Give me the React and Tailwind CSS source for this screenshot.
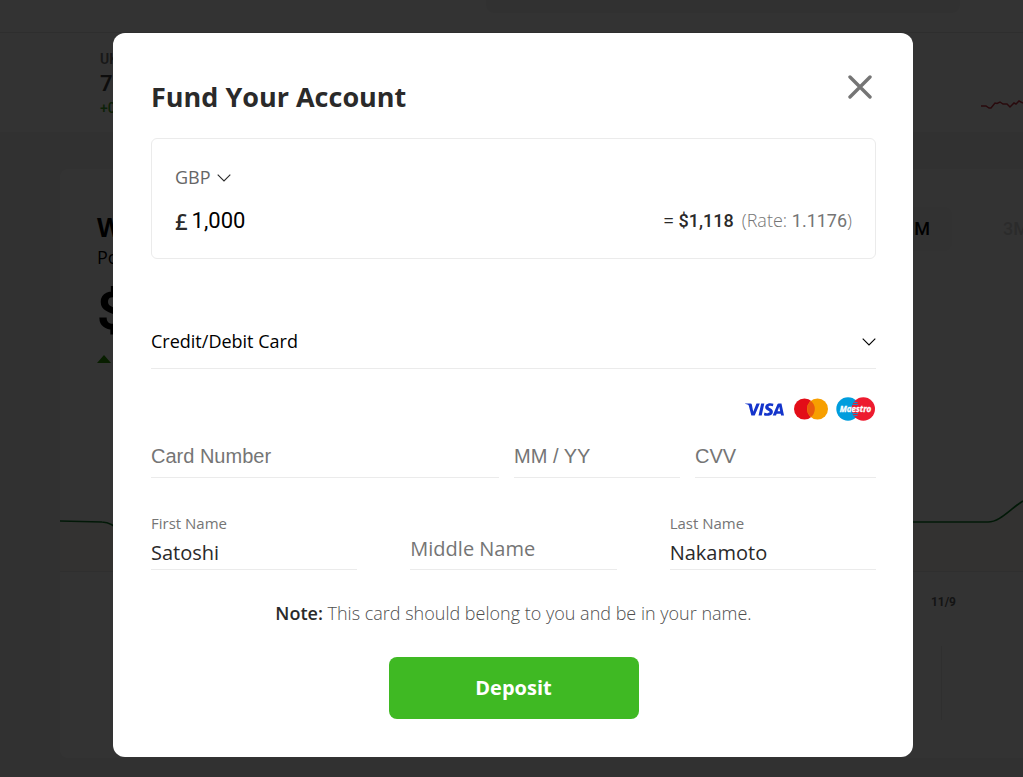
import { useState } from "react";
import { SiVisa } from "react-icons/si";

function Chevron() {
  return (
    <svg className="mt-0.5 h-2 w-3.5" viewBox="0 0 14 8" fill="none" stroke="currentColor" strokeWidth="1.1" aria-hidden="true">
      <path d="M0.7 0.7 7 7l6.3-6.3" />
    </svg>
  );
}

function Mastercard() {
  return (
    <svg className="h-[22px] w-[34px]" viewBox="0 0 34 22" role="img" aria-label="Mastercard">
      <circle cx="10.5" cy="11" r="10.5" fill="#e30d18" />
      <circle cx="23.5" cy="11" r="10.5" fill="#f79f00" />
      <path d="M17 2.9a10.5 10.5 0 0 1 0 16.2 10.5 10.5 0 0 1 0-16.2Z" fill="#ea5b0c" />
    </svg>
  );
}

function Maestro() {
  return (
    <svg className="h-6 w-[39px]" viewBox="0 0 39 24" role="img" aria-label="Maestro">
      <circle cx="12" cy="12" r="11.7" fill="#009ddd" />
      <circle cx="27.3" cy="12" r="11.7" fill="#ed1b2f" />
      <path d="M17.5 5.5h4M16.5 7.5h5.5M16.5 16.5h5.5M17.5 18.5h4" stroke="#009ddd" strokeWidth="0.9" />
      <text
        x="19.5"
        y="14.6"
        textAnchor="middle"
        fill="#fff"
        stroke="#fff"
        strokeWidth="0.3"
        className="font-['Open_Sans',sans-serif] text-[8px] font-bold italic"
      >
        Maestro
      </text>
    </svg>
  );
}

function CardField({ id, label, className }) {
  return (
    <div className={className}>
      <input
        id={id}
        aria-label={label}
        placeholder={label}
        className="block h-11 w-full border-b border-[#ebebeb] pt-0.5 font-['Liberation_Sans',Arial,sans-serif] text-xl text-[#2a2a2a] outline-none placeholder:text-[#757575]"
      />
    </div>
  );
}

function NameField({ id, label, defaultValue }) {
  if (!defaultValue) {
    return (
      <div className="flex-1">
        <input
          id={id}
          aria-label={label}
          placeholder={label}
          className="block h-14 w-full border-b border-[#ebebeb] pt-3.5 text-xl text-[#2a2a2a] outline-none placeholder:text-[#757575]"
        />
      </div>
    );
  }

  return (
    <div className="flex-1">
      <label htmlFor={id} className="block text-[15px] leading-[18px] text-[#757575]">
        {label}
      </label>
      <input
        id={id}
        defaultValue={defaultValue}
        className="block h-[38px] w-full border-b border-[#ebebeb] pt-1 text-xl text-[#2a2a2a] outline-none"
      />
    </div>
  );
}

function Dashboard() {
  return (
    <div className="h-screen overflow-hidden bg-[#f2f2f2] text-black" aria-hidden="true">
      <header className="flex h-[33px] justify-end border-b border-[#e4e4e4] bg-white pr-[63px]">
        <div className="h-[13px] w-[474px] rounded-b-lg bg-[#f5f5f5]" />
      </header>

      <section className="flex h-[99px] justify-between bg-white pt-[17px] pl-[100px]">
        <div className="font-['Roboto',sans-serif] font-medium">
          <p className="text-sm leading-[18px] font-semibold text-[#777]">UK</p>
          <p className="text-[22px] leading-8 font-semibold text-[#444]">71</p>
          <p className="text-sm leading-4 text-[#3fa32a]">+0.4</p>
        </div>
        <svg className="mt-11 h-5 w-[42px]" viewBox="0 0 42 20" fill="none" stroke="#cc3340" strokeWidth="1.5">
          <path d="M0 12h5l3 2h2l4-5 2 .5 3-1.5 3 2h4l3 3 4-4 2 1 3-3 4 2" />
        </svg>
      </section>

      <section className="mt-[37px] ml-[60px] flex h-[589px] flex-col overflow-hidden rounded-tl-lg rounded-bl-lg bg-white">
        <div className="flex justify-between pt-[38px] pl-[37px]">
          <div>
            <h2 className="h-10 text-[26px] leading-10 font-bold">Wall</h2>
            <p className="text-lg leading-5">Portfolio</p>
            <p className="mt-2.5 font-['Roboto',sans-serif] text-[52px] leading-[70px] font-bold">$0</p>
            <svg className="mt-2 h-2 w-3.5" viewBox="0 0 14 8">
              <path d="M0 8 7 0l7 8Z" fill="#299400" />
            </svg>
          </div>
          <div className="flex h-11 font-['Roboto',sans-serif] text-lg font-medium">
            <p className="flex w-16 items-center justify-end rounded-lg bg-[#f8f8f8] pr-[22px]">1M</p>
            <p className="flex w-[71px] items-center pl-[51px] text-[#d6d6d6]">3M</p>
          </div>
        </div>
        <svg className="mt-auto h-[76px] w-full shrink-0" viewBox="0 0 963 76" preserveAspectRatio="none">
          <path d="M0 26 42 27Q52 27 62 38L840 27H928C940 27 950 14 963 6V76H0Z" fill="#fcfbf4" />
          <path d="M0 26 42 27Q52 27 62 38M840 27H928C940 27 950 14 963 6" fill="none" stroke="#0a7a26" strokeWidth="1.7" />
        </svg>
        <div className="h-[187px] shrink-0 border-t border-[#ececec] pr-[67px] text-right">
          <p className="pt-[22px] font-['Roboto',sans-serif] text-xs leading-4 font-bold text-[#666]">11/9</p>
          <div className="mt-9 mr-3.5 ml-auto h-[74px] w-px bg-[#e8e8e8]" />
        </div>
      </section>
    </div>
  );
}

export default function App() {
  const [amount, setAmount] = useState("1,000");

  return (
    <div className="font-['Open_Sans',sans-serif]">
      <Dashboard />

      <div className="fixed inset-0 overflow-y-auto bg-black/80 pt-[33px] pb-5 pl-[3px]">
        <form
          role="dialog"
          aria-labelledby="fund-title"
          onSubmit={(e) => e.preventDefault()}
          className="mx-auto max-w-[800px] rounded-xl bg-white pt-[38px] pr-[37px] pb-[38px] pl-[38px] text-[#2a2a2a]"
        >
          <div className="flex items-start justify-between">
            <h1 id="fund-title" className="pt-1 text-[27px] leading-[44px] font-bold">
              Fund Your Account
            </h1>
            <button type="button" aria-label="Close" className="p-1 text-[#757575]">
              <svg className="h-6 w-6" viewBox="0 0 24 24" stroke="currentColor" strokeWidth="3.4" strokeLinecap="round">
                <path d="m2 2 20 20M22 2 2 22" />
              </svg>
            </button>
          </div>

          <div className="mt-[19px] rounded-md border border-[#ebebeb] px-[23px] pt-[26px] pb-[19px]">
            <div className="flex items-center gap-1.5 text-lg leading-6">
              <select
                aria-label="Currency"
                defaultValue="GBP"
                className="w-9 appearance-none font-medium text-[#666] outline-none"
              >
                <option>GBP</option>
                <option>EUR</option>
                <option>USD</option>
              </select>
              <Chevron />
            </div>
            <div className="mt-3.5 flex items-center justify-between">
              <div className="flex items-center gap-1">
                <label htmlFor="amount" className="text-[22px] leading-9 font-semibold">
                  £
                </label>
                <input
                  id="amount"
                  value={amount}
                  onChange={(e) => setAmount(e.target.value)}
                  className="w-40 font-['Roboto',sans-serif] text-[22px] leading-9 text-black outline-none"
                />
              </div>
              <p className="pb-0.5 text-lg font-light text-[#757575]">
                <span className="font-normal text-[#2a2a2a]">= </span>
                <span className="font-['Roboto',sans-serif] text-lg font-medium text-[#2a2a2a]">$1,118</span>
                <span className="ml-2">
                  (Rate: <span className="font-['Roboto',sans-serif] font-normal">1.1176</span>)
                </span>
              </p>
            </div>
          </div>

          <button
            type="button"
            aria-expanded="true"
            className="mt-[54px] flex h-14 w-full items-center justify-between border-b border-[#ebebeb] text-lg font-medium text-black"
          >
            Credit/Debit Card
            <Chevron />
          </button>

          <div className="mt-7 flex h-6 items-center justify-end gap-2 pr-px">
            <SiVisa className="mr-0.5 h-[39px] w-[39px] text-[#1434cb]" aria-label="Visa" />
            <Mastercard />
            <Maestro />
          </div>

          <div className="mt-[13px] flex gap-[15px]">
            <CardField id="card-number" label="Card Number" className="flex-1" />
            <CardField id="expiry" label="MM / YY" className="w-[166px]" />
            <CardField id="cvv" label="CVV" className="w-[181px]" />
          </div>

          <div className="mt-9 flex gap-[53px]">
            <NameField id="first-name" label="First Name" defaultValue="Satoshi" />
            <NameField id="middle-name" label="Middle Name" />
            <NameField id="last-name" label="Last Name" defaultValue="Nakamoto" />
          </div>

          <p className="mt-[29px] text-center text-lg leading-7 font-light text-[#4f4f4f]">
            <b className="font-semibold text-[#2a2a2a]">Note:</b> This card should belong to you and be in your name.
          </p>

          <button
            type="submit"
            className="mx-auto mt-[30px] block h-[62px] w-[250px] rounded-lg bg-[#3fb923] text-xl font-bold text-white"
          >
            Deposit
          </button>
        </form>
      </div>
    </div>
  );
}
